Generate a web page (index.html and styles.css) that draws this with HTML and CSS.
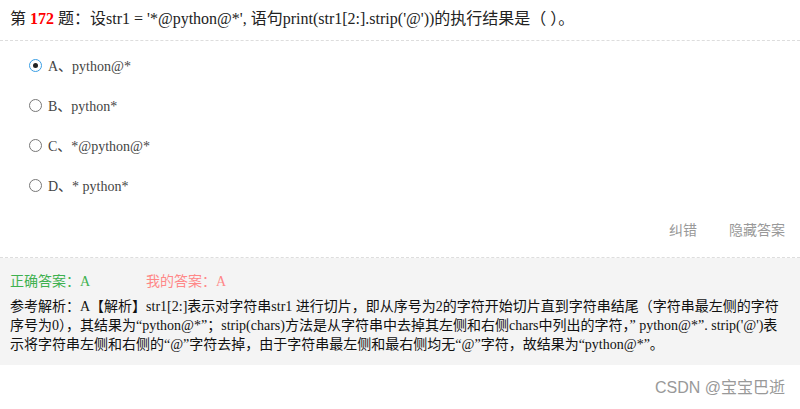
FILE: index.html
```html
<!DOCTYPE html>
<html lang="zh">
<head>
  <meta charset="UTF-8" />
  <title>第172题</title>
  <link rel="stylesheet" href="styles.css">
</head>
<body>
  <div class="question">
    <div class="title">第 <b class="num">172</b> 题：设str1 = '*@python@*', 语句print(str1[2:].strip('@'))的执行结果是（ ）。</div>
    <ul class="options">
      <li><span class="radio checked"></span>A、python@*</li>
      <li><span class="radio"></span>B、python*</li>
      <li><span class="radio"></span>C、*@python@*</li>
      <li><span class="radio"></span>D、* python*</li>
    </ul>
    <div class="actions">
      <a>纠错</a>
      <a>隐藏答案</a>
    </div>
    <div class="answer">
      <div class="result">
        <span class="right">正确答案：<b>A</b></span>
        <span class="mine">我的答案：<b>A</b></span>
      </div>
      <p class="analysis">参考解析：A【解析】str1[2:]表示对字符串str1 进行切片，即从序号为2的字符开始切片直到字符串结尾（字符串最左侧的字符序号为0），其结果为“python@*”；strip(chars)方法是从字符串中去掉其左侧和右侧chars中列出的字符，” python@*”. strip('@')表示将字符串左侧和右侧的“@”字符去掉，由于字符串最左侧和最右侧均无“@”字符，故结果为“python@*”。</p>
    </div>
  </div>
  <div class="mark">CSDN @宝宝巴逝</div>
</body>
</html>
```
FILE: styles.css
```css
body {
  margin: 0;
  background: #fff;
  color: #333;
  font-family: "Liberation Serif", "Noto Sans CJK SC", serif;
}
.title {
  height: 41px;
  line-height: 38px;
  padding: 0 10px;
  font-size: 16px;
  color: #222;
  border-bottom: 1px dashed #ddd;
  box-sizing: border-box;
}
.title .num { color: #f00; }
.options {
  list-style: none;
  margin: 0;
  padding: 4px 0 0 29px;
}
.options li {
  height: 40px;
  display: flex;
  align-items: center;
  font-size: 14px;
  color: #444;
}
.radio {
  width: 11px;
  height: 11px;
  border: 1px solid #777;
  border-radius: 50%;
  margin-right: 6px;
  position: relative;
  box-sizing: content-box;
}
.radio.checked { border-color: #3a9ee4; }
.radio.checked::after {
  content: "";
  position: absolute;
  left: 3px;
  top: 3px;
  width: 5px;
  height: 5px;
  border-radius: 50%;
  background: #222;
}
.actions {
  height: 53px;
  display: flex;
  justify-content: flex-end;
  align-items: center;
  gap: 32px;
  padding: 0 15px 5px 0;
  box-sizing: border-box;
  border-bottom: 1px dashed #ddd;
  font-family: "Noto Sans CJK SC", sans-serif;
  font-size: 14px;
  color: #999;
}
.answer {
  background: #f4f4f4;
  padding: 12px 19px 11px 10px;
}
.result {
  font-family: "Noto Sans CJK SC", sans-serif;
  font-size: 14px;
  line-height: 20px;
  display: flex;
}
.result b { font-family: "Liberation Serif", serif; font-weight: normal; }
.right { color: #3eb14f; width: 136px; }
.mine { color: #f88; }
.analysis {
  margin: 5px 0 0;
  font-size: 14px;
  line-height: 19px;
  color: #111;
}
.mark {
  text-align: right;
  padding: 14px 15px 0 0;
  line-height: 18px;
  font-family: "Liberation Sans", "Noto Sans CJK SC", sans-serif;
  font-size: 16px;
  color: #999;
}
```
